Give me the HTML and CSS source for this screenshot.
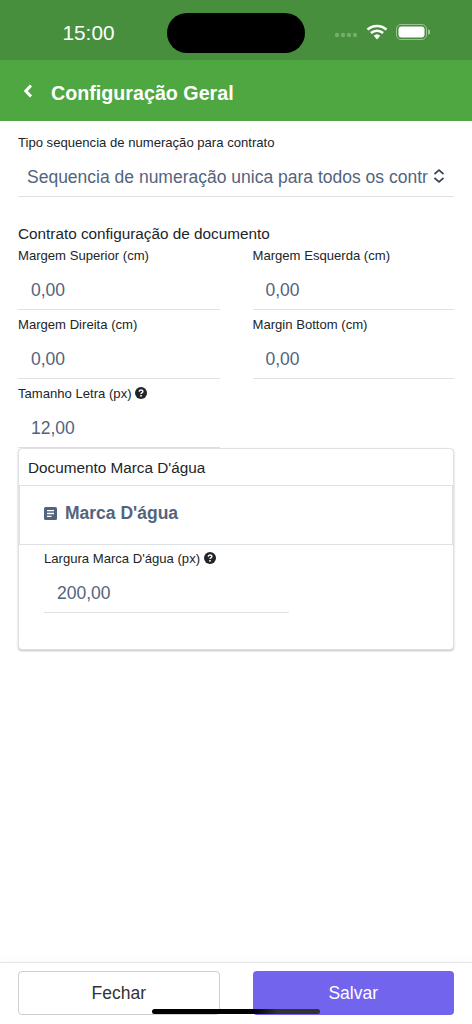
FILE: index.html
```html
<!DOCTYPE html>
<html lang="pt-BR">

<head>
    <meta charset="UTF-8">
    <meta name="viewport" content="width=device-width, initial-scale=1.0">
    <title>Configuração Geral</title>
    <link rel="stylesheet" href="styles.css">
</head>

<body>
    <div class="status-bar">
        <span class="status-time">15:00</span>
        <div class="island"></div>
        <div class="status-icons">
            <svg class="signal" width="24" height="6" viewBox="0 0 24 6">
                <circle cx="3" cy="3" r="2.2" />
                <circle cx="9" cy="3" r="2.2" />
                <circle cx="15" cy="3" r="2.2" />
                <circle cx="21" cy="3" r="2.2" />
            </svg>
            <svg class="wifi" width="22" height="16" viewBox="0 0 22 16">
                <path d="M1.5 5.6a14 14 0 0 1 19 0M4.9 9a9.2 9.2 0 0 1 12.2 0" fill="none" stroke="#fff" stroke-width="2.5" />
                <path d="M7.7 11.7a4.9 4.9 0 0 1 6.6 0L11 15.4z" fill="#fff" />
            </svg>
            <svg class="battery" width="34" height="16" viewBox="0 0 34 16">
                <rect x="0.5" y="0.5" width="30" height="15" rx="4.5" fill="none" stroke="#fff" stroke-opacity="0.45" />
                <rect x="2.5" y="2.5" width="26" height="11" rx="3" fill="#fff" />
                <path d="M32 5.5a2.5 2.5 0 0 1 0 5z" fill="#fff" fill-opacity="0.5" />
            </svg>
        </div>
    </div>

    <header class="app-header">
        <svg class="back" width="10" height="14" viewBox="0 0 10 14">
            <path d="M8 1.500 2.800 7 8 12.500" fill="none" stroke="#fff" stroke-width="3" />
        </svg>
        <h1>Configuração Geral</h1>
    </header>

    <main class="content">
        <label class="field-label">Tipo sequencia de numeração para contrato</label>
        <div class="select-wrap">
            <select class="select">
                <option>Sequencia de numeração unica para todos os contratos</option>
            </select>
            <svg class="chevrons" width="12" height="14" viewBox="0 0 12 14">
                <path d="M1.5 5 6 1.2 10.500 5M1.500 9 6 12.800 10.500 9" fill="none" stroke="#3b4656" stroke-width="1.700" />
            </svg>
        </div>

        <h2 class="section-title">Contrato configuração de documento</h2>
        <div class="field-grid">
            <div class="field">
                <label class="field-label">Margem Superior (cm)</label>
                <input class="input" type="text" value="0,00">
            </div>
            <div class="field">
                <label class="field-label">Margem Esquerda (cm)</label>
                <input class="input" type="text" value="0,00">
            </div>
            <div class="field">
                <label class="field-label">Margem Direita (cm)</label>
                <input class="input" type="text" value="0,00">
            </div>
            <div class="field">
                <label class="field-label">Margin Bottom (cm)</label>
                <input class="input" type="text" value="0,00">
            </div>
            <div class="field">
                <label class="field-label">Tamanho Letra (px)
                    <svg class="help" width="12" height="12" viewBox="0 0 12 12">
                        <circle cx="6" cy="6" r="6" fill="#212529" />
                        <path d="M4.200 4.700c0-2.300 3.700-2.300 3.700-.1 0 1.400-1.900 1.300-1.900 2.500" fill="none" stroke="#fff" stroke-width="1.400" />
                        <rect x="5.200" y="8" width="1.600" height="1.600" fill="#fff" />
                    </svg>
                </label>
                <input class="input" type="text" value="12,00">
            </div>
        </div>

        <section class="card">
            <div class="card-header">Documento Marca D'água</div>
            <div class="card-title">
                <svg class="doc-icon" width="13" height="13" viewBox="0 0 13 13">
                    <rect width="13" height="13" rx="1.500" fill="#52647d" />
                    <path d="M3 3.700h7M3 6.500h7M3 9.300h4.500" stroke="#fff" stroke-width="1.300" />
                </svg>
                <span>Marca D'água</span>
            </div>
            <div class="card-body">
                <label class="field-label">Largura Marca D'água (px)
                    <svg class="help" width="12" height="12" viewBox="0 0 12 12">
                        <circle cx="6" cy="6" r="6" fill="#212529" />
                        <path d="M4.200 4.700c0-2.300 3.700-2.300 3.700-.1 0 1.400-1.900 1.300-1.900 2.500" fill="none" stroke="#fff" stroke-width="1.400" />
                        <rect x="5.200" y="8" width="1.600" height="1.600" fill="#fff" />
                    </svg>
                </label>
                <input class="input" type="text" value="200,00">
            </div>
        </section>
    </main>

    <footer class="footer">
        <button class="btn btn-close">Fechar</button>
        <button class="btn btn-save">Salvar</button>
    </footer>
    <div class="home-indicator"></div>
</body>

</html>
```
FILE: styles.css
```css
* {
    box-sizing: border-box;
}

html,
body {
    height: 100%;
}

body {
    font-family: "Liberation Sans", Arial, sans-serif;
    margin: 0;
    background-color: #fff;
    color: #212529;
    display: flex;
    flex-direction: column;
    height: 1024px;
    overflow: hidden;
    position: relative;
}

.status-bar {
    height: 60px;
    background-color: #478f3d;
    display: grid;
    grid-template-columns: 167px 138px 167px;
    align-items: center;
    color: #fff;
}

.status-time {
    font-size: 20.8px;
    text-align: center;
    padding-left: 10px;
    margin-top: 6px;
}

.island {
    height: 40px;
    margin-top: 6px;
    background-color: #000;
    border-radius: 20px;
}

.status-icons {
    display: flex;
    align-items: center;
    padding-left: 29px;
    gap: 8px;
    margin-top: 4px;
}

.signal {
    fill: #fff;
    opacity: 0.25;
    margin-top: 6px;
}

.app-header {
    height: 61px;
    background-color: #4ea740;
    display: flex;
    align-items: center;
    padding: 6px 0 0 23px;
    color: #fff;
}

.back {
    margin-top: -5px;
}

.app-header h1 {
    font-size: 19.7px;
    margin: 0 0 0 18px;
    font-weight: bold;
}

.content {
    flex: 1;
    padding: 14px 18px 0;
}

.field-label {
    display: block;
    font-size: 13.1px;
    line-height: 16px;
}

.select-wrap {
    position: relative;
    margin-top: 8px;
    height: 38px;
    border-bottom: 1px solid #dee2e6;
}

.select {
    appearance: none;
    width: 100%;
    height: 35px;
    border: 0;
    background: none;
    font: inherit;
    font-size: 17.5px;
    color: #52647d;
    padding: 0 26px 0 9px;
}

.chevrons {
    position: absolute;
    right: 9px;
    top: 10px;
}

.section-title {
    font-size: 15.3px;
    font-weight: normal;
    line-height: 20px;
    margin: 27px 0 4px;
}

.field-grid {
    display: grid;
    grid-template-columns: 1fr 1fr;
    column-gap: 33px;
}

.field {
    height: 69px;
}

.input {
    display: block;
    width: 100%;
    height: 39px;
    margin-top: 7px;
    border: 0;
    border-bottom: 1px solid #dee2e6;
    background: none;
    font: inherit;
    font-size: 17.5px;
    color: #52647d;
    padding: 0 13px;
}

.help {
    vertical-align: -1px;
}

.card {
    margin-top: -7px;
    height: 202px;
    border: 1px solid #dfe1e3;
    border-radius: 4px;
    box-shadow: 0 1px 2px rgba(0, 0, 0, 0.25);
    background-color: #fff;
    position: relative;
}

.card-header {
    height: 37px;
    padding-left: 9px;
    font-size: 15.3px;
    line-height: 37px;
    border-bottom: 1px solid #dee2e6;
}

.card-title {
    height: 59px;
    display: flex;
    align-items: center;
    padding: 0 0 3px 24px;
    gap: 8px;
    color: #52647d;
    font-size: 17.5px;
    font-weight: bold;
    border: 1px solid #dee2e6;
    border-top: 0;
}

.card-body {
    padding: 6px 25px 0;
}

.card-body .input {
    width: 245px;
}

.footer {
    height: 62px;
    border-top: 1px solid #e6e6e6;
    padding: 8px 18px 0;
    display: grid;
    grid-template-columns: 1fr 1fr;
    column-gap: 33px;
    align-items: start;
    box-shadow: 0 -6px 8px rgba(0, 0, 0, 0.015);
}

.btn {
    height: 44px;
    font: inherit;
    font-size: 17.5px;
    border-radius: 4px;
    cursor: pointer;
}

.btn-close {
    background-color: #fff;
    border: 1px solid #cfcfcf;
    color: #333;
}

.btn-save {
    background-color: #7364ee;
    border: 0;
    color: #fff;
}

.home-indicator {
    position: absolute;
    left: 152px;
    top: 1009px;
    width: 168px;
    height: 5px;
    border-radius: 3px;
    background: linear-gradient(90deg, #000 60%, #333 75%);
}
```
